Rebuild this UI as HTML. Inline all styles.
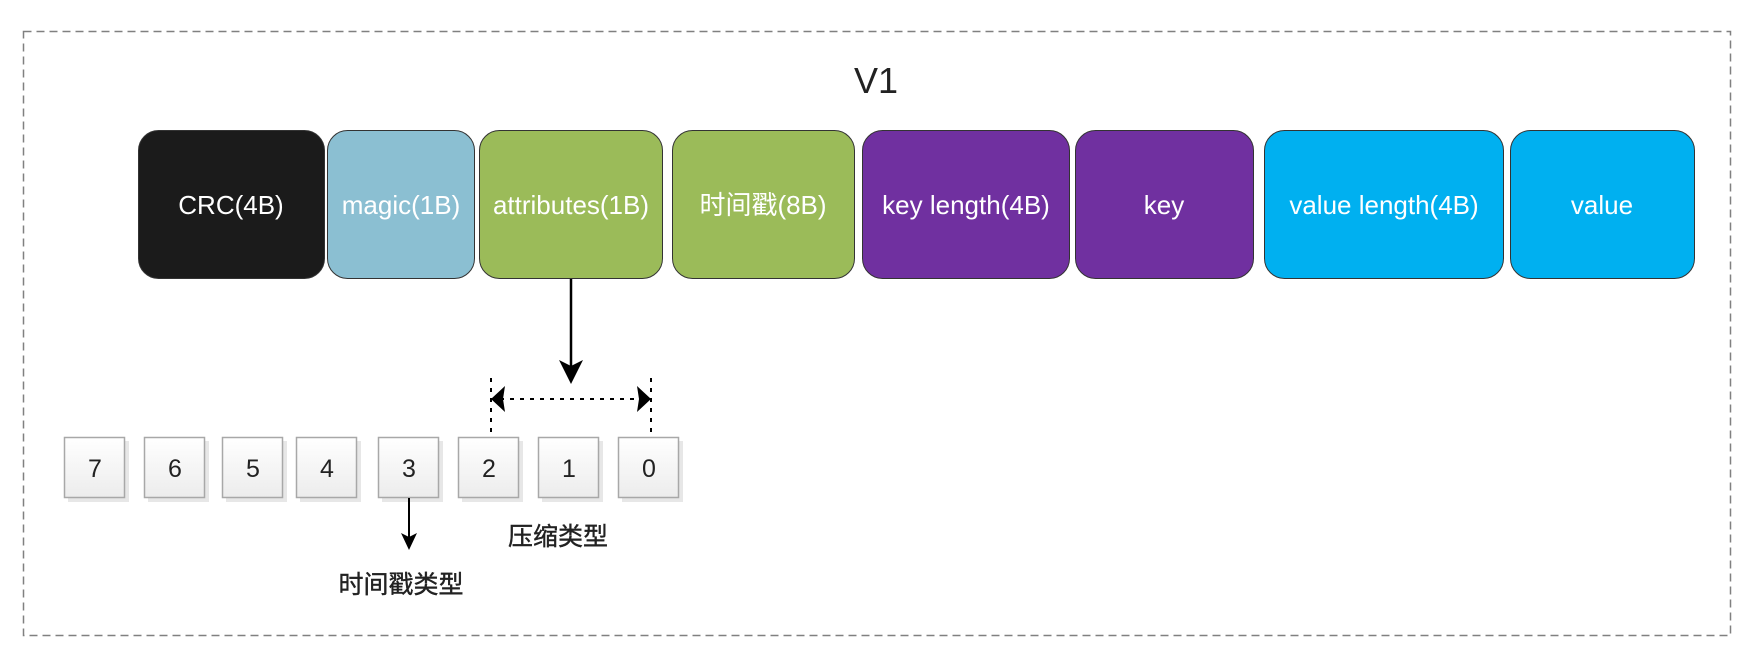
<!DOCTYPE html>
<html><head><meta charset="utf-8"><style>
html,body{margin:0;padding:0;background:#fff;width:1750px;height:652px;overflow:hidden}
svg{display:block}
text{font-family:"Liberation Sans","Noto Sans CJK SC",sans-serif}
</style></head><body>
<svg width="1750" height="652" viewBox="0 0 1750 652" xmlns="http://www.w3.org/2000/svg">
<defs>
<linearGradient id="g" x1="0" y1="0" x2="0" y2="1"><stop offset="0" stop-color="#ffffff"/><stop offset="1" stop-color="#ececec"/></linearGradient>
</defs>
<rect x="23.5" y="31.5" width="1707" height="604" fill="none" stroke="#808080" stroke-width="1.5" stroke-dasharray="8,5"/>
<text x="876" y="93" font-size="36" text-anchor="middle" fill="#222">V1</text>
<g stroke="#333" stroke-width="1">
<rect x="138.5" y="130.5" width="186" height="148" rx="20" fill="#1b1b1b"/>
<rect x="327.5" y="130.5" width="147" height="148" rx="20" fill="#8bbfd2"/>
<rect x="479.5" y="130.5" width="183" height="148" rx="20" fill="#9bbb59"/>
<rect x="672.5" y="130.5" width="182" height="148" rx="20" fill="#9bbb59"/>
<rect x="862.5" y="130.5" width="207" height="148" rx="20" fill="#7030a0"/>
<rect x="1075.5" y="130.5" width="178" height="148" rx="20" fill="#7030a0"/>
<rect x="1264.5" y="130.5" width="239" height="148" rx="20" fill="#00b0f0"/>
<rect x="1510.5" y="130.5" width="184" height="148" rx="20" fill="#00b0f0"/>
</g>
<g fill="#fff" font-size="26" text-anchor="middle">
<text x="231" y="214">CRC(4B)</text>
<text x="401" y="214">magic(1B)</text>
<text x="571" y="214">attributes(1B)</text>
<text x="763" y="214">时间戳(8B)</text>
<text x="966" y="214">key length(4B)</text>
<text x="1164" y="214">key</text>
<text x="1384" y="214">value length(4B)</text>
<text x="1602" y="214">value</text>
</g>
<line x1="571" y1="279" x2="571" y2="370" stroke="#000" stroke-width="2.5"/>
<path d="M559 360 L571 384 L583 360 L571 366 Z" fill="#000"/>
<g stroke="#000" stroke-width="2" stroke-dasharray="4,6">
<line x1="491" y1="378" x2="491" y2="437"/>
<line x1="651" y1="378" x2="651" y2="437"/>
<line x1="500" y1="399" x2="642" y2="399"/>
</g>
<path d="M491 399 L505 386 L503 399 L505 412 Z" fill="#000"/>
<path d="M651 399 L637 386 L639 399 L637 412 Z" fill="#000"/>
<g>
<g fill="#ddd" opacity="0.7">
<rect x="68" y="441" width="61" height="61"/><rect x="148" y="441" width="61" height="61"/><rect x="226" y="441" width="61" height="61"/><rect x="300" y="441" width="61" height="61"/><rect x="382" y="441" width="61" height="61"/><rect x="462" y="441" width="61" height="61"/><rect x="542" y="441" width="61" height="61"/><rect x="622" y="441" width="61" height="61"/>
</g>
<g fill="url(#g)" stroke="#a8a8a8" stroke-width="1.5">
<rect x="64.5" y="437.5" width="60" height="60"/><rect x="144.5" y="437.5" width="60" height="60"/><rect x="222.5" y="437.5" width="60" height="60"/><rect x="296.5" y="437.5" width="60" height="60"/><rect x="378.5" y="437.5" width="60" height="60"/><rect x="458.5" y="437.5" width="60" height="60"/><rect x="538.5" y="437.5" width="60" height="60"/><rect x="618.5" y="437.5" width="60" height="60"/>
</g>
<g font-size="25" fill="#222" text-anchor="middle">
<text x="95" y="477">7</text><text x="175" y="477">6</text><text x="253" y="477">5</text><text x="327" y="477">4</text><text x="409" y="477">3</text><text x="489" y="477">2</text><text x="569" y="477">1</text><text x="649" y="477">0</text>
</g>
</g>
<line x1="409" y1="498" x2="409" y2="538" stroke="#000" stroke-width="2"/>
<path d="M401 533 L409 550 L417 533 L409 537 Z" fill="#000"/>
<text x="558" y="545" font-size="25" fill="#222" stroke="#222" stroke-width="0.4" text-anchor="middle">压缩类型</text>
<text x="401" y="593" font-size="25" fill="#222" stroke="#222" stroke-width="0.4" text-anchor="middle">时间戳类型</text>
</svg>
</body></html>
